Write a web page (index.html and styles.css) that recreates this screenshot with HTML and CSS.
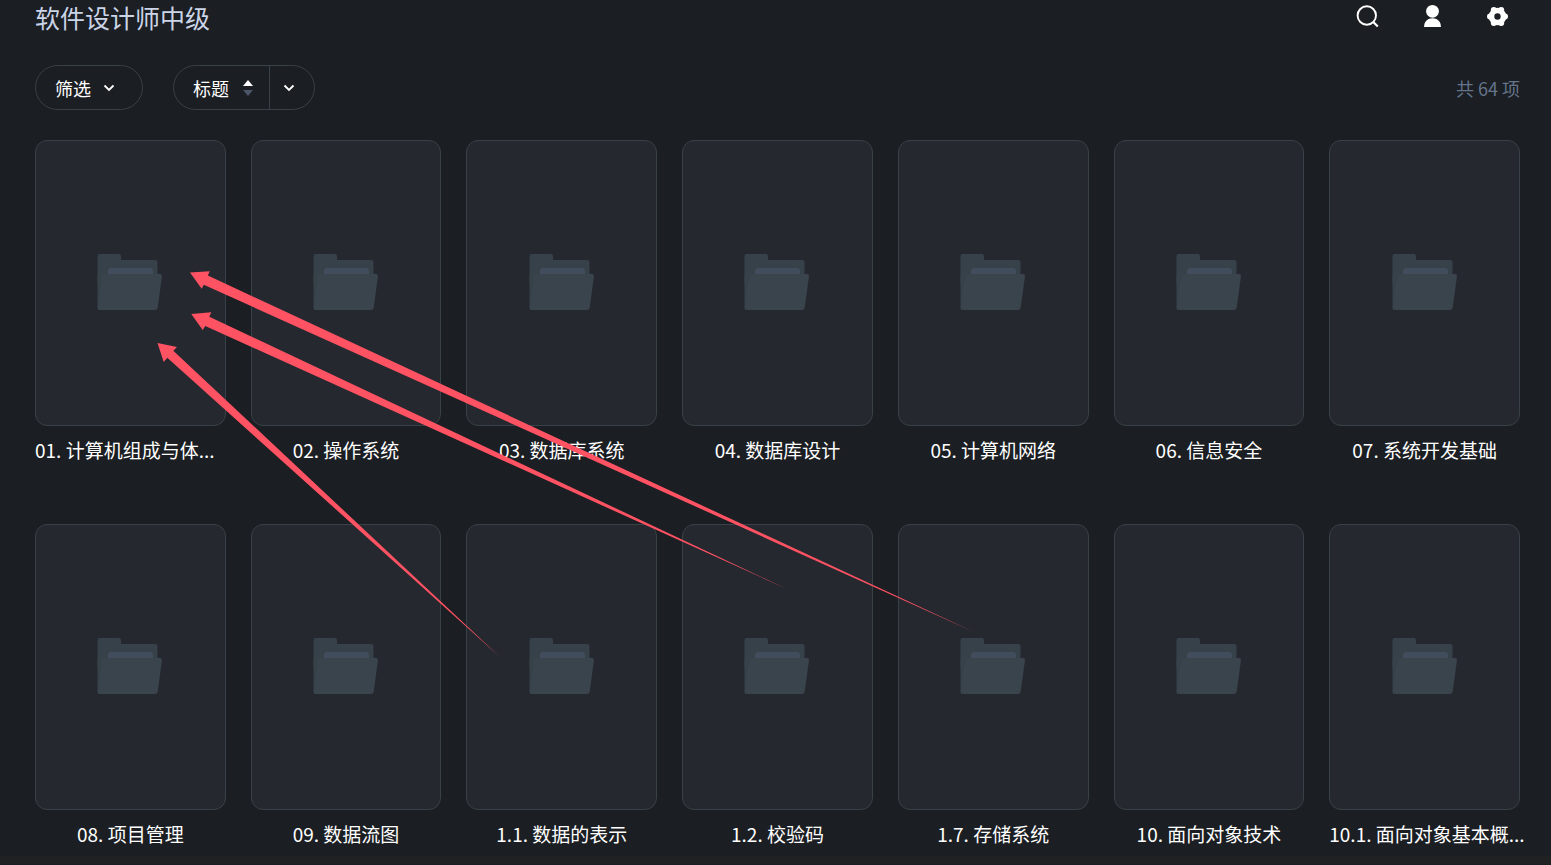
FILE: index.html
```html
<!DOCTYPE html>
<html lang="zh-CN">
<head>
  <meta charset="UTF-8">
  <meta name="viewport" content="width=device-width, initial-scale=1.0">
  <title>软件设计师中级</title>
  <link rel="stylesheet" href="styles.css">
</head>
<body>
  <!-- Shared icons -->
  <svg class="sprite" aria-hidden="true">
    <symbol id="folder" viewBox="-1 0 68 58">
      <path class="folder-back" d="M2.500 0H22Q24 0 24 2V6H58.500Q60.500 6 60.500 8V30H0.500V2Q0.500 0 2.500 0Z"/>
      <path class="folder-paper" d="M14 14H53Q56 14 56 17V22H11V17Q11 14 14 14Z"/>
      <path class="folder-back" d="M0.500 20H6L3 52L0.500 54Z"/>
      <path class="folder-front" d="M8 20H63Q65.200 20 65 22L60.800 53Q60.400 56 58 56H2.500Q0.500 56 0.500 54L5 23Q5.400 20 8 20Z"/>
    </symbol>
    <symbol id="chevron" viewBox="0 0 12 12">
      <path d="M1.500 3.500L6 8L10.500 3.500" fill="none" stroke="currentColor" stroke-width="1.800"/>
    </symbol>
  </svg>

  <div class="page">
    <!-- Header -->
    <header class="header">
      <h1>软件设计师中级</h1>
      <div class="header-actions">
        <button class="icon-btn" aria-label="搜索">
          <svg viewBox="0 0 24 24"><circle cx="10.800" cy="11.500" r="9.200" fill="none" stroke="currentColor" stroke-width="1.900"/><path d="M17.300 18L21.800 22.500" stroke="currentColor" stroke-width="2.200"/></svg>
        </button>
        <button class="icon-btn" aria-label="用户">
          <svg viewBox="0 0 24 24"><circle cx="11.500" cy="7.300" r="6.400" fill="currentColor"/><path d="M3 23Q3 17.500 7.500 15Q11.500 13.500 15.500 15Q20 17.500 20 23Z" fill="currentColor"/></svg>
        </button>
        <button class="icon-btn" aria-label="设置">
          <svg viewBox="0 0 24 24"><circle cx="11.500" cy="12.500" r="6" fill="none" stroke="currentColor" stroke-width="5.600"/><g fill="currentColor"><circle cx="7.800" cy="5.900" r="3"/><circle cx="15.200" cy="5.900" r="3"/><circle cx="4" cy="12.500" r="3"/><circle cx="19" cy="12.500" r="3"/><circle cx="7.800" cy="19.100" r="3"/><circle cx="15.200" cy="19.100" r="3"/></g></svg>
        </button>
      </div>
    </header>

    <!-- Toolbar -->
    <div class="toolbar">
      <button class="pill filter-btn">筛选 <svg class="chevron"><use href="#chevron"/></svg></button>
      <div class="pill sort">
        <button class="sort-btn">标题
          <svg class="sort-icon" viewBox="0 0 12 18"><path d="M6 1L11 7H1Z" fill="#fff"/><path class="sort-down" d="M1 11H11L6 17Z"/></svg>
        </button>
        <button class="sort-menu" aria-label="排序方式"><svg class="chevron"><use href="#chevron"/></svg></button>
      </div>
      <span class="total">共 64 项</span>
    </div>

    <!-- Folder grid -->
    <main class="grid">
      <a class="item" href="#"><span class="cover"><svg class="folder"><use href="#folder"/></svg></span><span class="name name-long">01. 计算机组成与体...</span></a>
      <a class="item" href="#"><span class="cover"><svg class="folder"><use href="#folder"/></svg></span><span class="name">02. 操作系统</span></a>
      <a class="item" href="#"><span class="cover"><svg class="folder"><use href="#folder"/></svg></span><span class="name">03. 数据库系统</span></a>
      <a class="item" href="#"><span class="cover"><svg class="folder"><use href="#folder"/></svg></span><span class="name">04. 数据库设计</span></a>
      <a class="item" href="#"><span class="cover"><svg class="folder"><use href="#folder"/></svg></span><span class="name">05. 计算机网络</span></a>
      <a class="item" href="#"><span class="cover"><svg class="folder"><use href="#folder"/></svg></span><span class="name">06. 信息安全</span></a>
      <a class="item" href="#"><span class="cover"><svg class="folder"><use href="#folder"/></svg></span><span class="name">07. 系统开发基础</span></a>
      <a class="item" href="#"><span class="cover"><svg class="folder"><use href="#folder"/></svg></span><span class="name">08. 项目管理</span></a>
      <a class="item" href="#"><span class="cover"><svg class="folder"><use href="#folder"/></svg></span><span class="name">09. 数据流图</span></a>
      <a class="item" href="#"><span class="cover"><svg class="folder"><use href="#folder"/></svg></span><span class="name">1.1. 数据的表示</span></a>
      <a class="item" href="#"><span class="cover"><svg class="folder"><use href="#folder"/></svg></span><span class="name">1.2. 校验码</span></a>
      <a class="item" href="#"><span class="cover"><svg class="folder"><use href="#folder"/></svg></span><span class="name">1.7. 存储系统</span></a>
      <a class="item" href="#"><span class="cover"><svg class="folder"><use href="#folder"/></svg></span><span class="name">10. 面向对象技术</span></a>
      <a class="item" href="#"><span class="cover"><svg class="folder"><use href="#folder"/></svg></span><span class="name name-long">10.1. 面向对象基本概...</span></a>
    </main>

    <!-- Arrows drawn over the grid -->
    <svg class="arrows" viewBox="0 0 1551 865" aria-hidden="true">
      <path d="M190 272.500L209.700 271.300L207.900 275.500L974 632L203.800 284.800L201.700 288.700Z"/>
      <path d="M191.300 314L211.300 312.300L209.300 316.700L787 589L205.300 326L202.700 330Z"/>
      <path d="M157.500 343L177 347L173.300 350.700L500 657L167.300 357.700L163.700 362Z"/>
    </svg>
  </div>
  <footer class="bottom-bar"></footer>
</body>
</html>
```

FILE: styles.css
```css
/* General Styles */
* {
  box-sizing: border-box;
}

body {
  margin: 0;
  background: #1b1e22;
  color: #fff;
  font-family: "Noto Sans CJK SC", sans-serif;
  font-size: 18px;
}

button {
  padding: 0;
  border: none;
  background: none;
  color: inherit;
  font: inherit;
  cursor: pointer;
}

svg {
  display: block;
}

.sprite {
  position: absolute;
  width: 0;
  height: 0;
}

.page {
  position: relative;
  padding: 0 31px 8px 35px;
}

/* Header */
.header {
  display: flex;
  justify-content: space-between;
  align-items: flex-start;
}

.header h1 {
  margin: 0;
  color: #cbd5e8;
  font-size: 25px;
  font-weight: 400;
  line-height: 34px;
}

.header-actions {
  display: flex;
  gap: 20px;
}

.icon-btn {
  display: flex;
  align-items: center;
  justify-content: center;
  width: 45px;
  height: 32px;
}

.icon-btn svg {
  width: 24px;
  height: 24px;
}

/* Toolbar */
.toolbar {
  display: flex;
  align-items: center;
  gap: 30px;
  margin: 31px 0 30px;
}

.pill {
  display: flex;
  align-items: center;
  height: 45px;
  border: 1px solid #374147;
  border-radius: 23px;
}

.filter-btn {
  gap: 12px;
  padding: 0 27px 0 19px;
}

.chevron {
  width: 12px;
  height: 12px;
}

.sort-btn {
  display: flex;
  align-items: center;
  gap: 13px;
  height: 100%;
  padding: 0 15px 0 19px;
}

.sort-icon {
  width: 12px;
  height: 18px;
}

.sort-down {
  fill: #4c566b;
}

.sort-menu {
  height: 100%;
  padding: 0 19px 0 13px;
  border-left: 1px solid #374147;
}

.total {
  margin-left: auto;
  color: #64748b;
}

/* Folder grid */
.grid {
  display: grid;
  grid-template-columns: repeat(7, 1fr);
  gap: 60px 25px;
}

.item {
  min-width: 0;
  color: inherit;
  text-decoration: none;
}

.cover {
  display: flex;
  align-items: center;
  justify-content: center;
  aspect-ratio: 2 / 3;
  border: 1px solid #374147;
  border-radius: 12px;
  background: #25292f;
}

.folder {
  width: 68px;
  height: 58px;
}

.folder-back {
  fill: #374149;
}

.folder-paper {
  fill: #414d5c;
}

.folder-front {
  fill: #3a444c;
}

.name {
  display: block;
  margin-top: 10px;
  font-size: 19px;
  line-height: 28px;
  text-align: center;
  white-space: nowrap;
}

.name-long {
  text-align: left;
}

/* Arrows */
.arrows {
  position: absolute;
  top: 0;
  left: 0;
  width: 100%;
  fill: #ff5263;
  pointer-events: none;
}

/* Bottom bar */
.bottom-bar {
  height: 8px;
  background: #202122;
}
```
